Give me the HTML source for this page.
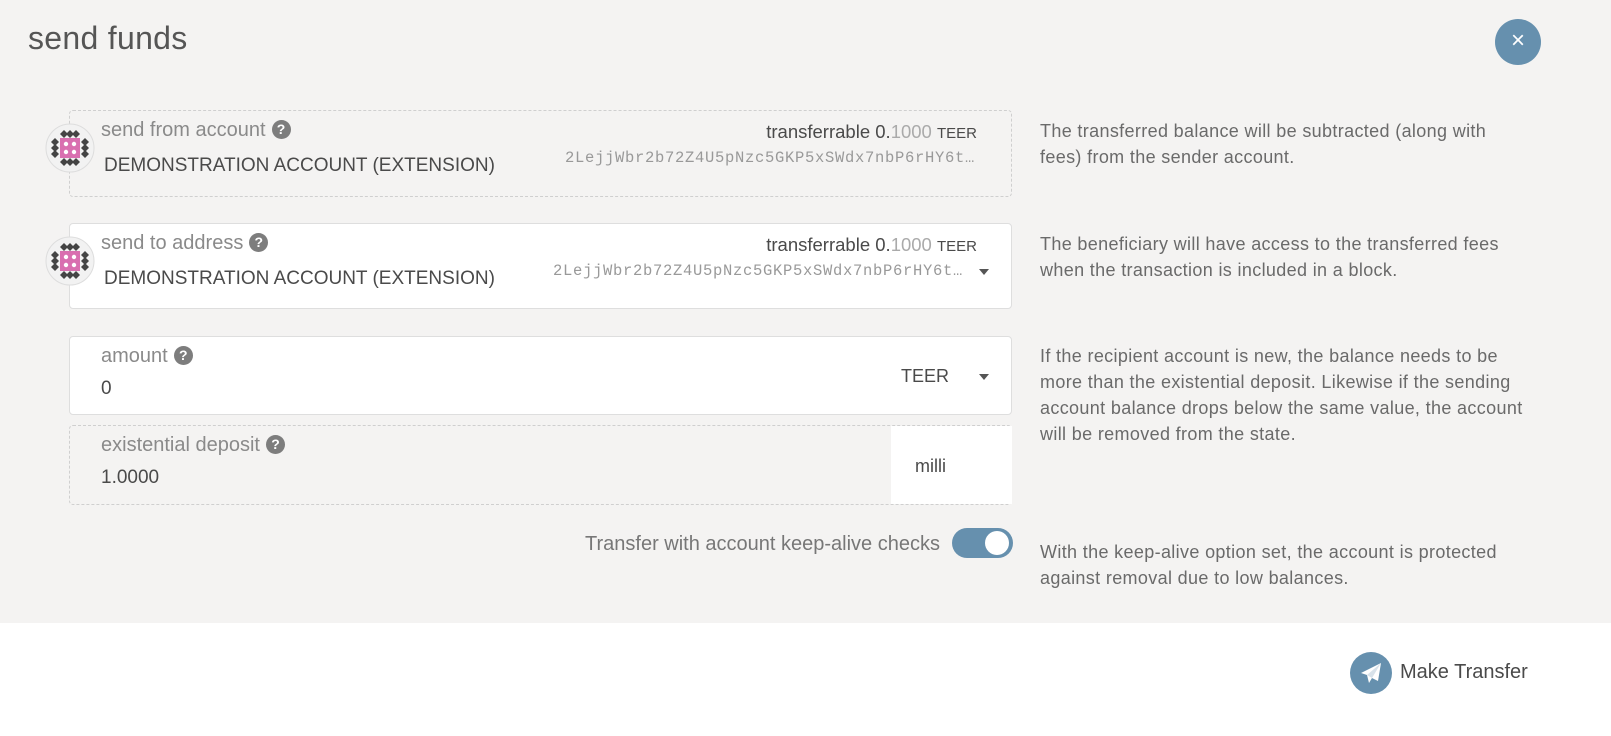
<!DOCTYPE html>
<html><head><style>
body{margin:0;width:1611px;height:736px;background:#fff;font-family:"Liberation Sans",sans-serif;position:relative;overflow:hidden}
.top{position:absolute;left:0;top:0;width:1611px;height:623px;background:#f4f3f2}
.a{position:absolute}
h1{position:absolute;left:28px;top:20px;margin:0;font-weight:300;font-size:32px;color:#555;letter-spacing:0.3px}
.box{position:absolute;left:69px;width:943px;box-sizing:border-box;border-radius:4px}
.dash{border:1px dashed #cfcfcf}
.solid{border:1px solid #dedede;background:#fff}
.lbl{position:absolute;left:31px;font-size:20px;color:#8a8a8a}
.q{display:inline-block;width:19px;height:19px;border-radius:50%;background:#7d7d7d;color:#fff;font-size:14px;font-weight:bold;text-align:center;line-height:19px;vertical-align:2px;margin-left:6px}
.val{position:absolute;left:34px;font-size:19px;color:#4a4a4a}
.bal{position:absolute;right:34px;font-size:18.5px;color:#4a4a4a}
.bal span{color:#aaa}.bal small{font-size:15px}
.addr{position:absolute;right:48px;font-family:"Liberation Mono",monospace;font-size:15.5px;letter-spacing:0.7px;color:#999}
.help{position:absolute;left:1040px;font-size:18px;letter-spacing:0.35px;color:#6a6a6a;line-height:26px;width:560px}
.caret{position:absolute;right:22px;width:0;height:0;border-left:5px solid transparent;border-right:5px solid transparent;border-top:6px solid #555}
.ic{position:absolute;left:45px;width:50px;height:50px}
</style></head><body>
<div class="top"></div>
<h1>send funds</h1>
<div class="a" style="left:1495px;top:19px;width:46px;height:46px;border-radius:50%;background:#6690ae;color:#fff;font-size:24px;text-align:center;line-height:44px">×</div>

<div class="box dash" style="top:110px;height:87px">
 <div class="lbl" style="top:8px">send from account<span class="q">?</span></div>
 <div class="val" style="top:44px">DEMONSTRATION ACCOUNT (EXTENSION)</div>
 <div class="bal" style="top:10px">transferrable 0.<span>1000</span> <small>TEER</small></div>
 <div class="addr" style="top:38px;right:36px">2LejjWbr2b72Z4U5pNzc5GKP5xSWdx7nbP6rHY6t…</div>
</div>
<svg class="ic" style="top:123px" viewBox="0 0 50 50"><circle cx="25" cy="25" r="24" fill="#f2f2f2" stroke="#ddd"/><g fill="#444"><path d="M19 7l4 4-4 4-4-4zM25 7l4 4-4 4-4-4zM31 7l4 4-4 4-4-4zM19 35l4 4-4 4-4-4zM25 35l4 4-4 4-4-4zM31 35l4 4-4 4-4-4zM10 15l4 4-4 4-4-4zM10 21l4 4-4 4-4-4zM10 27l4 4-4 4-4-4zM40 15l4 4-4 4-4-4zM40 21l4 4-4 4-4-4zM40 27l4 4-4 4-4-4z"/></g><rect x="15" y="15" width="20" height="20" fill="#d96fb0"/><g fill="#fff"><circle cx="21" cy="21" r="2.2"/><circle cx="29" cy="21" r="2.2"/><circle cx="21" cy="29" r="2.2"/><circle cx="29" cy="29" r="2.2"/></g></svg>
<div class="help" style="top:118px">The transferred balance will be subtracted (along with<br>fees) from the sender account.</div>

<div class="box solid" style="top:223px;height:86px">
 <div class="lbl" style="top:8px">send to address<span class="q">?</span></div>
 <div class="val" style="top:44px">DEMONSTRATION ACCOUNT (EXTENSION)</div>
 <div class="bal" style="top:10px">transferrable 0.<span>1000</span> <small>TEER</small></div>
 <div class="addr" style="top:38px">2LejjWbr2b72Z4U5pNzc5GKP5xSWdx7nbP6rHY6t…</div>
 <div class="caret" style="top:45px"></div>
</div>
<svg class="ic" style="top:236px" viewBox="0 0 50 50"><circle cx="25" cy="25" r="24" fill="#f2f2f2" stroke="#ddd"/><g fill="#444"><path d="M19 7l4 4-4 4-4-4zM25 7l4 4-4 4-4-4zM31 7l4 4-4 4-4-4zM19 35l4 4-4 4-4-4zM25 35l4 4-4 4-4-4zM31 35l4 4-4 4-4-4zM10 15l4 4-4 4-4-4zM10 21l4 4-4 4-4-4zM10 27l4 4-4 4-4-4zM40 15l4 4-4 4-4-4zM40 21l4 4-4 4-4-4zM40 27l4 4-4 4-4-4z"/></g><rect x="15" y="15" width="20" height="20" fill="#d96fb0"/><g fill="#fff"><circle cx="21" cy="21" r="2.2"/><circle cx="29" cy="21" r="2.2"/><circle cx="21" cy="29" r="2.2"/><circle cx="29" cy="29" r="2.2"/></g></svg>
<div class="help" style="top:231px">The beneficiary will have access to the transferred fees<br>when the transaction is included in a block.</div>

<div class="box solid" style="top:336px;height:79px">
 <div class="lbl" style="top:8px">amount<span class="q">?</span></div>
 <div class="val" style="left:31px;top:41px">0</div>
 <div class="a" style="right:62px;top:29px;font-size:18px;color:#4a4a4a">TEER</div>
 <div class="caret" style="top:37px"></div>
</div>
<div class="box dash" style="top:425px;height:80px">
 <div class="lbl" style="top:8px">existential deposit<span class="q">?</span></div>
 <div class="val" style="left:31px;top:41px">1.0000</div>
 <div class="a" style="left:821px;top:0;width:121px;height:78px;background:#fff"></div>
 <div class="a" style="left:845px;top:30px;font-size:18px;color:#4a4a4a">milli</div>
</div>
<div class="help" style="top:343px">If the recipient account is new, the balance needs to be<br>more than the existential deposit. Likewise if the sending<br>account balance drops below the same value, the account<br>will be removed from the state.</div>

<div class="a" style="right:671px;top:533px;font-size:20px;color:#777">Transfer with account keep-alive checks</div>
<div class="a" style="left:952px;top:528px;width:61px;height:30px;border-radius:15px;background:#6690ae"><div class="a" style="left:33px;top:3px;width:24px;height:24px;border-radius:50%;background:#fff"></div></div>
<div class="help" style="top:539px">With the keep-alive option set, the account is protected<br>against removal due to low balances.</div>

<div class="a" style="left:1350px;top:652px;width:42px;height:42px;border-radius:50%;background:#6690ae">
<svg width="42" height="42" viewBox="0 0 42 42"><path d="M31 11L11 21l6 2 2 8 3-5 6 3z" fill="#fff"/><path d="M17 23l14-12-9 15z" fill="#d8e2ea"/></svg></div>
<div class="a" style="left:1400px;top:661px;font-size:20px;color:#4a4a4a">Make Transfer</div>
</body></html>
